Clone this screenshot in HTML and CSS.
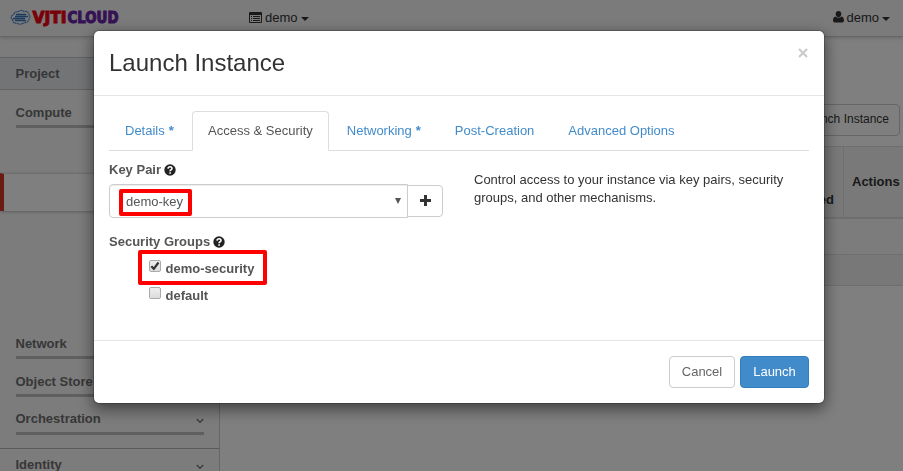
FILE: index.html
```html
<!DOCTYPE html>
<html lang="en">
<head>
<meta charset="utf-8">
<title>Launch Instance</title>
<link rel="stylesheet" href="styles.css">
</head>
<body>
<header class="topbar">
  <svg class="logo" width="112" height="20" viewBox="0 0 112 20">
    <path d="M4 7Q5 4 8 5Q11 2 14 4.500Q18 3.500 18.500 7Q21 9 19 12Q18 16 14 15.500Q10 18.500 7 16Q3 17 3 13.500Q-1 10 4 7z" fill="none" stroke="#4a86cc" stroke-width="1.200" stroke-dasharray="2 .5"/>
    <path d="M6 7.500h10M5 9.500h13M3 11.500h12M5 13.500h11" stroke="#3474bd" stroke-width="1.400"/>
    <text x="22.5" y="16" class="logo-text logo-red" textLength="34" lengthAdjust="spacingAndGlyphs">VJTI</text>
    <text x="57.5" y="16" class="logo-text logo-purple" textLength="51" lengthAdjust="spacingAndGlyphs">CLOUD</text>
  </svg>
  <div class="menu">
    <svg width="13" height="11" viewBox="0 0 13 11"><path fill="#333" fill-rule="evenodd" d="M1 0h11q1 0 1 1v9q0 1-1 1H1q-1 0-1-1V1q0-1 1-1zM1 3v7h11V3zM2 4h1v1H2zm2 0h7v1H4zM2 6h1v1H2zm2 0h7v1H4zM2 8h1v1H2zm2 0h7v1H4z"/></svg>
    <span>demo</span><i class="caret"></i>
  </div>
  <div class="menu user">
    <svg width="11" height="12" viewBox="0 0 11 12"><path fill="#333" d="M5.500 0C7.300 0 8.300 1.300 8.300 3S7.200 6.200 5.500 6.200 2.700 4.700 2.700 3 3.700 0 5.500 0zM2.500 5.500q3 2.400 6 0Q11 6 11 9.500q0 2-1.800 2H1.800Q0 11.500 0 9.500 0 6 2.500 5.500z"/></svg>
    <span>demo</span><i class="caret"></i>
  </div>
</header>
<div class="page">
  <nav class="sidebar">
    <div class="dash">Project</div>
    <div class="group compute">Compute</div>
    <div class="selected"></div>
    <div class="group network">Network</div>
    <div class="group store">Object Store</div>
    <div class="group orchestration">Orchestration<svg width="8" height="6" viewBox="0 0 8 6"><path d="M.7 1L4 4.300 7.300 1" fill="none" stroke="#777" stroke-width="1.300"/></svg></div>
    <div class="identity">Identity<svg width="8" height="6" viewBox="0 0 8 6"><path d="M.7 1L4 4.300 7.300 1" fill="none" stroke="#777" stroke-width="1.300"/></svg></div>
  </nav>
  <main class="content">
    <div class="actions"><button class="btn launch-bg">Launch Instance</button></div>
    <div class="thead"><div class="th created">created</div><div class="th">Actions</div></div>
    <div class="row"></div>
    <div class="tfoot"></div>
  </main>
</div>
<div class="overlay">
  <section class="modal">
    <div class="modal-header"><h3>Launch Instance</h3>
      <svg class="close" width="10" height="10" viewBox="0 0 10 10"><path d="M1 1l8 8M9 1L1 9" stroke="#ccc" stroke-width="2.300"/></svg>
    </div>
    <div class="modal-body">
      <div class="tabs">
        <div class="tab">Details <b>*</b></div>
        <div class="tab active">Access &amp; Security</div>
        <div class="tab">Networking <b>*</b></div>
        <div class="tab">Post-Creation</div>
        <div class="tab">Advanced Options</div>
      </div>
      <div class="columns">
        <div class="form">
          <div class="label">Key Pair <svg class="help" width="12" height="12" viewBox="0 0 12 12"><circle cx="6" cy="6" r="5.700" fill="#222"/><path d="M4 4.700Q4.200 2.700 6.100 2.700T8 4.400Q8 5.400 6.800 6 6.100 6.400 6.100 7.200M6.100 8.200v1.500" fill="none" stroke="#fff" stroke-width="1.600"/></svg></div>
          <div class="key">
            <div class="select"><span>demo-key</span><i class="arrow"></i><div class="mark mark-key"></div></div>
            <div class="add"><svg width="11" height="11" viewBox="0 0 11 11"><path d="M5.500 0v11M0 5.500h11" stroke="#333" stroke-width="3"/></svg></div>
          </div>
          <div class="label groups">Security Groups <svg class="help" width="12" height="12" viewBox="0 0 12 12"><circle cx="6" cy="6" r="5.700" fill="#222"/><path d="M4 4.700Q4.200 2.700 6.100 2.700T8 4.400Q8 5.400 6.800 6 6.100 6.400 6.100 7.200M6.100 8.200v1.500" fill="none" stroke="#fff" stroke-width="1.600"/></svg></div>
          <div class="choices">
            <div class="choice"><span class="box"><svg width="10" height="10" viewBox="0 0 10 10"><path d="M1.300 5.200l2.500 2.600L8.500 1.500" fill="none" stroke="#333" stroke-width="2.200"/></svg></span>demo-security<div class="mark mark-group"></div></div>
            <div class="choice"><span class="box"></span>default</div>
          </div>
        </div>
        <p class="description">Control access to your instance via key pairs, security groups, and other mechanisms.</p>
      </div>
    </div>
    <div class="modal-footer"><button class="btn cancel">Cancel</button><button class="btn primary">Launch</button></div>
  </section>
</div>
</body>
</html>
```
FILE: styles.css
```css
* { box-sizing: border-box; }
html, body { height: 100%; }
body { margin: 0; overflow: hidden; font: 13px/18px "Liberation Sans", Arial, sans-serif; color: #333; background: #fff; }
svg { display: block; flex: none; }
.topbar { display: flex; align-items: center; height: 37px; padding: 0 13px 0 10px; background: #f6f6f6; border-bottom: 1px solid #ccc; box-shadow: 0 1px 4px rgba(0,0,0,.18); position: relative; }
.logo { margin: -2px 127px 0 0; }
.logo-text { font: bold 16px "DejaVu Sans", sans-serif; stroke-width: 1.1; }
.logo-red { fill: #f20012; stroke: #f20012; }
.logo-purple { fill: #6b25a8; stroke: #6b25a8; }
.menu { display: flex; align-items: center; gap: 3px; height: 18px; margin-top: -1px; }
.menu svg { margin-top: -1px; }
.user { margin-left: auto; }
.user span { margin-left: -.5px; }
.caret { border: 4px solid transparent; border-top-color: #333; border-bottom: 0; margin-top: 2px; }
.page { display: flex; height: 434px; }
.sidebar { width: 220px; flex: none; padding-top: 20px; background: #f9f9f9; border-right: 1px solid #ccc; font-weight: bold; color: #6e6e6e; }
.dash { height: 33px; padding: 8px 15.5px; line-height: 16px; background: #e6e9ed; border: solid #c6c6c6; border-width: 1px 0; }
.group { height: 24px; margin: 0 15px 0 16px; border-bottom: 3px solid #bfbfbf; line-height: 18px; text-indent: -.5px; }
.compute { margin-top: 14px; }
.selected { height: 38px; margin-top: 45px; background: #fff; border-top: 1px solid #ddd; border-left: 4px solid #d73925; box-shadow: 0 1px 3px rgba(0,0,0,.25); }
.network { margin-top: 124px; }
.store { margin-top: 14px; }
.orchestration { height: 25px; margin-top: 13px; }
.orchestration, .identity { display: flex; justify-content: space-between; }
.orchestration svg, .identity svg { margin-top: 8px; }
.identity { margin-top: 13px; padding: 7px 15px 0 15.5px; border-top: 1px solid #b5b5b5; }
.content { flex: 1; padding-top: 67px; }
.actions { display: flex; justify-content: flex-end; padding-right: 3px; }
.btn { height: 32px; padding: 0 10px; border: 1px solid #ccc; border-radius: 4px; background: #fff; color: #333; font: inherit; }
.launch-bg { font-size: 12px; padding-bottom: 2px; }
.thead { display: flex; justify-content: flex-end; height: 73px; margin-top: 10px; border-top: 1px solid #ddd; border-bottom: 2px solid #ddd; background: #f3f3f3; font-weight: bold; }
.th { width: 60px; padding: 26px 0 0 8px; border-left: 1px solid #ddd; white-space: nowrap; }
.th.created { width: 90px; padding: 44px 9px 0 0; text-align: right; border: 0; }
.row { height: 35px; background: #f9f9f9; }
.tfoot { height: 32px; background: #f1f1f1; border: solid #ddd; border-width: 1px 0; }
.overlay { position: fixed; inset: 0; background: rgba(0,0,0,.5); padding: 30px 78px 0 93px; }
.modal { width: 732px; height: 374px; background: #fff; background-clip: padding-box; border: 1px solid rgba(0,0,0,.2); border-radius: 6px; box-shadow: 0 5px 15px rgba(0,0,0,.5); display: flex; flex-direction: column; }
.modal-header { display: flex; justify-content: space-between; height: 65px; padding: 15px; border-bottom: 1px solid #e5e5e5; }
h3 { margin: 0; font-size: 24px; line-height: 34px; font-weight: 500; }
.close { margin-top: 2px; margin-right: 1px; }
.modal-body { flex: 1; padding: 15px; }
.tabs { display: flex; height: 40px; border-bottom: 1px solid #ddd; }
.tab { height: 40px; padding: 10px 15px; border: 1px solid transparent; margin-right: 2px; color: #428bca; border-radius: 4px 4px 0 0; white-space: nowrap; }
.tab b { margin-left: .4px; }
.tab:first-child { margin-right: 2.2px; }
.active { color: #555; background: #fff; border-color: #ddd #ddd #fff; }
.columns { display: flex; }
.form { width: 334px; margin-right: 31px; color: #555; }
.label { display: flex; align-items: center; gap: 3px; height: 18px; margin-top: 10px; font-weight: bold; }
.help { margin-top: -1px; }
.key { display: flex; align-items: center; margin-top: 5px; }
.select { position: relative; width: 299px; height: 34px; padding: 0 6px 0 16px; border: 1px solid #ccc; border-radius: 4px 0 0 4px; box-shadow: inset 0 1px 1px rgba(0,0,0,.075); display: flex; align-items: center; justify-content: space-between; }
.select span { padding-top: 2px; }
.arrow { border: 3px solid transparent; border-top: 6px solid #555; border-bottom: 0; }
.add { width: 36px; height: 32px; margin-left: -1px; border: 1px solid #ccc; border-radius: 0 4px 4px 0; display: flex; align-items: center; justify-content: center; padding-bottom: 1px; }
.groups { margin-top: 15px; }
.choices { padding: 9px 0 0 40px; font-weight: bold; }
.choice { position: relative; display: flex; height: 27px; gap: 4.5px; line-height: 18px; }
.box { width: 12px; height: 12px; border: 1px solid #aaa; border-radius: 2px; background: linear-gradient(#eee, #ddd); }
.mark { position: absolute; border: 4px solid #f00; border-radius: 2px; }
.mark-key { left: 9px; top: 4px; width: 73px; height: 27px; }
.mark-group { left: -11px; top: -10px; width: 129px; height: 35px; }
.description { width: 335px; margin: 20px 0 0; }
.modal-footer { height: 63px; padding: 15px; border-top: 1px solid #e5e5e5; display: flex; justify-content: flex-end; gap: 5px; }
.cancel { width: 66px; color: #666; padding: 0; }
.primary { width: 69px; color: #fff; background: #428bca; border-color: #357ebd; padding: 0; }
```
